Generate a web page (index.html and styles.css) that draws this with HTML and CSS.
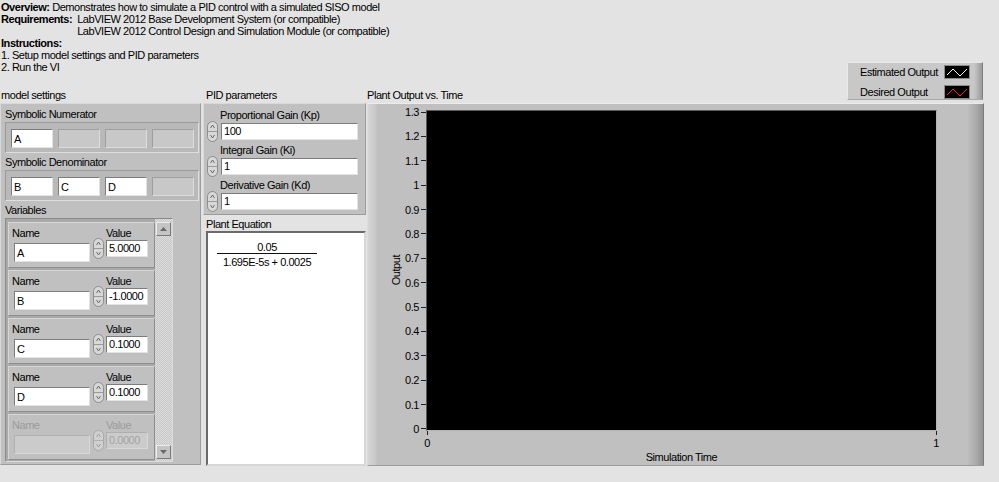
FILE: index.html
```html
<!DOCTYPE html>
<html>
<head>
<meta charset="utf-8">
<title>PID SISO</title>
<link rel="stylesheet" href="styles.css">
</head>
<body>
<header class="intro">
  <div class="line"><b>Overview:</b> Demonstrates how to simulate a PID control with a simulated SISO model</div>
  <div class="req">
    <b>Requirements:</b>
    <div>
      <div class="line">LabVIEW 2012 Base Development System (or compatible)</div>
      <div class="line">LabVIEW 2012 Control Design and Simulation Module (or compatible)</div>
    </div>
  </div>
  <div class="line"><b>Instructions:</b></div>
  <div class="line">1. Setup model settings and PID parameters</div>
  <div class="line">2. Run the VI</div>
</header>

<main class="panel">
  <section class="col-model">
    <div class="cap">model settings</div>
    <div class="cluster model">
      <div class="lbl">Symbolic Numerator</div>
      <div class="arr">
        <div class="cell">A</div>
        <div class="cell empty"></div>
        <div class="cell empty"></div>
        <div class="cell empty"></div>
      </div>
      <div class="lbl">Symbolic Denominator</div>
      <div class="arr">
        <div class="cell">B</div>
        <div class="cell">C</div>
        <div class="cell">D</div>
        <div class="cell empty"></div>
      </div>
      <div class="lbl">Variables</div>
      <div class="vars">
        <div class="var-list">
          <div class="var">
            <div class="vname"><div class="vl">Name</div><div class="str">A</div></div>
            <svg class="spin" width="11" height="21" viewBox="0 0 11 21"><rect x=".5" y=".5" width="10" height="20" rx="5" fill="#d8d8d8" stroke="#8c8c8c"/><path d="M1 10.5h9" stroke="#9a9a9a"/><path d="M3.5 7l2-3 2 3" fill="none" stroke="#6a6a6a"/><path d="M3.5 14l2 3 2-3" fill="none" stroke="#6a6a6a"/></svg>
            <div class="vval"><div class="vl">Value</div><div class="num">5.0000</div></div>
          </div>
          <div class="var">
            <div class="vname"><div class="vl">Name</div><div class="str">B</div></div>
            <svg class="spin" width="11" height="21" viewBox="0 0 11 21"><rect x=".5" y=".5" width="10" height="20" rx="5" fill="#d8d8d8" stroke="#8c8c8c"/><path d="M1 10.5h9" stroke="#9a9a9a"/><path d="M3.5 7l2-3 2 3" fill="none" stroke="#6a6a6a"/><path d="M3.5 14l2 3 2-3" fill="none" stroke="#6a6a6a"/></svg>
            <div class="vval"><div class="vl">Value</div><div class="num">-1.0000</div></div>
          </div>
          <div class="var">
            <div class="vname"><div class="vl">Name</div><div class="str">C</div></div>
            <svg class="spin" width="11" height="21" viewBox="0 0 11 21"><rect x=".5" y=".5" width="10" height="20" rx="5" fill="#d8d8d8" stroke="#8c8c8c"/><path d="M1 10.5h9" stroke="#9a9a9a"/><path d="M3.5 7l2-3 2 3" fill="none" stroke="#6a6a6a"/><path d="M3.5 14l2 3 2-3" fill="none" stroke="#6a6a6a"/></svg>
            <div class="vval"><div class="vl">Value</div><div class="num">0.1000</div></div>
          </div>
          <div class="var">
            <div class="vname"><div class="vl">Name</div><div class="str">D</div></div>
            <svg class="spin" width="11" height="21" viewBox="0 0 11 21"><rect x=".5" y=".5" width="10" height="20" rx="5" fill="#d8d8d8" stroke="#8c8c8c"/><path d="M1 10.5h9" stroke="#9a9a9a"/><path d="M3.5 7l2-3 2 3" fill="none" stroke="#6a6a6a"/><path d="M3.5 14l2 3 2-3" fill="none" stroke="#6a6a6a"/></svg>
            <div class="vval"><div class="vl">Value</div><div class="num">0.1000</div></div>
          </div>
          <div class="var disabled">
            <div class="vname"><div class="vl">Name</div><div class="str"></div></div>
            <svg class="spin" width="11" height="21" viewBox="0 0 11 21"><rect x=".5" y=".5" width="10" height="20" rx="5" fill="#d0d0d0" stroke="#a8a8a8"/><path d="M1 10.5h9" stroke="#b0b0b0"/><path d="M3.5 7l2-3 2 3" fill="none" stroke="#a0a0a0"/><path d="M3.5 14l2 3 2-3" fill="none" stroke="#a0a0a0"/></svg>
            <div class="vval"><div class="vl">Value</div><div class="num">0.0000</div></div>
          </div>
        </div>
        <div class="scroll">
          <div class="sbtn"><svg width="7" height="4" viewBox="0 0 7 4"><path d="M0 4L3.5 0 7 4z" fill="#6a6a6a"/></svg></div>
          <div class="sbtn"><svg width="7" height="4" viewBox="0 0 7 4"><path d="M0 0L3.5 4 7 0z" fill="#6a6a6a"/></svg></div>
        </div>
      </div>
    </div>
  </section>

  <section class="col-mid">
    <div class="cap">PID parameters</div>
    <div class="cluster pid">
      <div class="plbl">Proportional Gain (Kp)</div>
      <div class="prow">
        <svg class="spin" width="11" height="21" viewBox="0 0 11 21"><rect x=".5" y=".5" width="10" height="20" rx="5" fill="#d8d8d8" stroke="#8c8c8c"/><path d="M1 10.5h9" stroke="#9a9a9a"/><path d="M3.5 7l2-3 2 3" fill="none" stroke="#6a6a6a"/><path d="M3.5 14l2 3 2-3" fill="none" stroke="#6a6a6a"/></svg>
        <div class="pbox">100</div>
      </div>
      <div class="plbl">Integral Gain (Ki)</div>
      <div class="prow">
        <svg class="spin" width="11" height="21" viewBox="0 0 11 21"><rect x=".5" y=".5" width="10" height="20" rx="5" fill="#d8d8d8" stroke="#8c8c8c"/><path d="M1 10.5h9" stroke="#9a9a9a"/><path d="M3.5 7l2-3 2 3" fill="none" stroke="#6a6a6a"/><path d="M3.5 14l2 3 2-3" fill="none" stroke="#6a6a6a"/></svg>
        <div class="pbox">1</div>
      </div>
      <div class="plbl">Derivative Gain (Kd)</div>
      <div class="prow">
        <svg class="spin" width="11" height="21" viewBox="0 0 11 21"><rect x=".5" y=".5" width="10" height="20" rx="5" fill="#d8d8d8" stroke="#8c8c8c"/><path d="M1 10.5h9" stroke="#9a9a9a"/><path d="M3.5 7l2-3 2 3" fill="none" stroke="#6a6a6a"/><path d="M3.5 14l2 3 2-3" fill="none" stroke="#6a6a6a"/></svg>
        <div class="pbox">1</div>
      </div>
    </div>
    <div class="cap eqcap">Plant Equation</div>
    <div class="eqbox">
      <div class="frac">
        <div class="fnum">0.05</div>
        <div class="fden">1.695E-5s + 0.0025</div>
      </div>
    </div>
  </section>

  <section class="col-graph">
    <div class="ghead">
      <div class="cap">Plant Output vs. Time</div>
      <div class="legend">
        <div class="lrow"><span>Estimated Output</span>
          <svg width="26" height="14" viewBox="0 0 26 14"><rect x=".5" y=".5" width="25" height="13" fill="#000" stroke="#8a8a8a"/><path d="M3 10L9 4l7 7 7-7" fill="none" stroke="#fff" stroke-width="1"/></svg>
        </div>
        <div class="lrow"><span>Desired Output</span>
          <svg width="26" height="14" viewBox="0 0 26 14"><rect x=".5" y=".5" width="25" height="13" fill="#000" stroke="#8a8a8a"/><path d="M3 10L9 4l7 7 7-7" fill="none" stroke="#ff2020" stroke-width="1"/></svg>
        </div>
      </div>
    </div>
    <div class="graph">
      <div class="yblock">
        <div class="ytitle">Output</div>
        <div class="yaxis">
          <div class="yt">1.3<i></i></div>
          <div class="yt">1.2<i></i></div>
          <div class="yt">1.1<i></i></div>
          <div class="yt">1<i></i></div>
          <div class="yt">0.9<i></i></div>
          <div class="yt">0.8<i></i></div>
          <div class="yt">0.7<i></i></div>
          <div class="yt">0.6<i></i></div>
          <div class="yt">0.5<i></i></div>
          <div class="yt">0.4<i></i></div>
          <div class="yt">0.3<i></i></div>
          <div class="yt">0.2<i></i></div>
          <div class="yt">0.1<i></i></div>
          <div class="yt">0<i></i></div>
        </div>
      </div>
      <div class="plot"></div>
      <div class="xaxis">
        <div class="xt"><i></i>0</div>
        <div class="xt"><i></i>1</div>
      </div>
      <div class="xtitle">Simulation Time</div>
    </div>
  </section>
</main>
</body>
</html>
```

FILE: styles.css
```css
* { box-sizing: border-box; margin: 0; padding: 0; }
html, body { width: 999px; height: 482px; overflow: hidden; }
body {
  background: #e3e3e3;
  font-family: "Liberation Sans", Arial, sans-serif;
  font-size: 11px;
  letter-spacing: -0.45px;
  line-height: 12px;
  color: #000;
}

/* intro text */
.intro { height: 89px; padding: 1px 0 0 1px; }
.line { height: 12px; white-space: nowrap; }
.req { display: flex; }
.req b { margin-right: 5px; }

/* main panel */
.panel { display: flex; align-items: flex-start; }
.cap { height: 12px; white-space: nowrap; }

/* model settings column */
.col-model { width: 201px; }
.col-model .cap { padding-left: 1px; margin-bottom: 2px; }
.cluster {
  background: #c0c0c0;
  border: 1px solid;
  border-color: #d9d9d9 #9c9c9c #9c9c9c #d9d9d9;
}
.model { width: 201px; height: 362px; padding: 4px 1px 0 4px; }
.lbl { height: 12px; white-space: nowrap; }
.arr {
  display: flex; gap: 5px;
  width: 194px; height: 31px;
  margin: 2px 0 3px;
  padding: 6px 0 4px 5px;
  background: #b9b9b9;
  border: 1px solid;
  border-color: #9a9a9a #dedede #dedede #9a9a9a;
}
.cell {
  width: 42px; height: 19px;
  background: #fff;
  border: 1px solid;
  border-color: #7c7c7c #e2e2e2 #e2e2e2 #7c7c7c;
  padding: 2px 0 0 2px;
  line-height: 14px;
}
.cell.empty { background: #c8c8c8; border-color: #9e9e9e #dcdcdc #dcdcdc #9e9e9e; }

.vars {
  display: flex;
  width: 168px; height: 244px;
  margin-top: 2px;
  padding-left: 2px;
  background: #a9a9a9;
  border: 1px solid;
  border-color: #8a8a8a #dcdcdc #dcdcdc #8a8a8a;
}
.var-list {
  width: 147px; height: 242px;
  padding-top: 3px;
  display: flex; flex-direction: column; gap: 2px;
  overflow: hidden;
}
.var {
  flex: none;
  height: 46px;
  display: flex; align-items: flex-start;
  padding: 4px 0 0 3px;
  background: #c0c0c0;
  border: 1px solid;
  border-color: #d6d6d6 #8e8e8e #8e8e8e #d6d6d6;
}
.vname { width: 79px; }
.vl { height: 12px; }
.str {
  width: 76px; height: 19px;
  margin: 4px 0 0 2px;
  padding: 3px 0 0 2px;
  line-height: 13px;
  background: #fff;
  border: 1px solid;
  border-color: #7c7c7c #e2e2e2 #e2e2e2 #7c7c7c;
}
.var .spin { margin: 11px 0 0 2px; flex: none; }
.vval { margin-left: 2px; }
.num {
  width: 42px; height: 17px;
  margin-top: 1px;
  padding: 1px 0 0 2px;
  line-height: 13px;
  background: #fff;
  border: 1px solid;
  border-color: #7c7c7c #e2e2e2 #e2e2e2 #7c7c7c;
}
.var.disabled { color: #9c9c9c; }
.var.disabled .str,
.var.disabled .num { background: #cbcbcb; border-color: #b0b0b0 #d8d8d8 #d8d8d8 #b0b0b0; color: #a4a4a4; }

.scroll {
  width: 17px; height: 242px;
  padding: 3px 1px 2px;
  display: flex; flex-direction: column; justify-content: space-between;
  background: repeating-conic-gradient(#c6c6c6 0 25%, #dedede 0 50%) 0 0 / 2px 2px;
}
.sbtn {
  height: 14px;
  display: flex; align-items: center; justify-content: center;
  background: #c4c4c4;
  border: 1px solid;
  border-color: #ececec #7a7a7a #7a7a7a #ececec;
}

/* middle column */
.col-mid { width: 166px; }
.col-mid .cap { padding-left: 5px; margin-bottom: 2px; }
.pid {
  width: 163px; height: 112px;
  margin-left: 2px;
  padding: 5px 0 0 3px;
}
.plbl { height: 12px; padding-left: 13px; white-space: nowrap; }
.prow { display: flex; height: 21px; margin-bottom: 2px; }
.prow .spin { flex: none; }
.pbox {
  width: 137px; height: 17px;
  margin: 2px 0 0 3px;
  padding: 1px 0 0 2px;
  line-height: 13px;
  background: #fff;
  border: 1px solid;
  border-color: #7c7c7c #e2e2e2 #e2e2e2 #7c7c7c;
}
.col-mid .eqcap { margin: 3px 0 1px; }
.eqbox {
  width: 160px; height: 235px;
  margin-left: 5px;
  padding: 8px 0 0 9px;
  background: #fff;
  border: 2px solid;
  border-color: #6a6a6a #d8d8d8 #d8d8d8 #6a6a6a;
}
.frac { width: 100px; text-align: center; }
.fnum { height: 13px; border-bottom: 1px solid #111; }
.fden { height: 12px; margin-top: 2px; }

/* graph column */
.col-graph { width: 617px; }
.ghead {
  display: flex; justify-content: space-between; align-items: flex-end;
  margin-bottom: 2px;
}
.legend {
  width: 136px; height: 38px;
  margin: -27px 1px 1px 0;
  padding: 2px 12px 0 12px;
  display: flex; flex-direction: column; gap: 6px;
  background: linear-gradient(to right, #c8c8c8 0, #c8c8c8 calc(100% - 8px), #9a9a9a 100%);
  border: 1px solid;
  border-color: #e8e8e8 #808080 #a8a8a8 #e8e8e8;
}
.lrow { display: flex; justify-content: space-between; align-items: center; height: 14px; white-space: nowrap; }
.lrow svg { display: block; flex: none; }

.graph {
  width: 617px; height: 363px;
  display: grid;
  grid-template-columns: 58px 511px 1fr;
  grid-template-rows: 6px 321px 20px 12px;
  padding-bottom: 2px;
  background: linear-gradient(to right, #d6d6d6 0, #c8c8c8 8px, #c0c0c0 9px, #c0c0c0 calc(100% - 16px), #a8a8a8 calc(100% - 6px), #909090 100%);
  border: 1px solid;
  border-color: #ececec #7c7c7c #9c9c9c #dcdcdc;
}
.yblock {
  grid-column: 1; grid-row: 2;
  display: flex; justify-content: flex-end; align-items: center;
}
.ytitle {
  width: 12px;
  writing-mode: vertical-rl;
  transform: rotate(180deg);
  text-align: center;
  line-height: 12px;
}
.yaxis {
  width: 24px;
  align-self: stretch;
  margin: -4px 0;
  display: flex; flex-direction: column; justify-content: space-between;
}
.yt { height: 12px; display: flex; justify-content: flex-end; align-items: center; }
.yt i { width: 5px; height: 1px; margin-left: 2px; background: #222; }
.plot {
  grid-column: 2; grid-row: 2;
  background: #000;
  border: 1px solid;
  border-color: #5a5a5a #b4b4b4 #b4b4b4 #5a5a5a;
}
.xaxis {
  grid-column: 2; grid-row: 3;
  margin: 0 -3px;
  display: flex; justify-content: space-between;
}
.xt { width: 8px; display: flex; flex-direction: column; align-items: center; }
.xt i { width: 1px; height: 4px; margin-bottom: 2px; background: #222; }
.xtitle { grid-column: 2; grid-row: 4; text-align: center; white-space: nowrap; }
```
